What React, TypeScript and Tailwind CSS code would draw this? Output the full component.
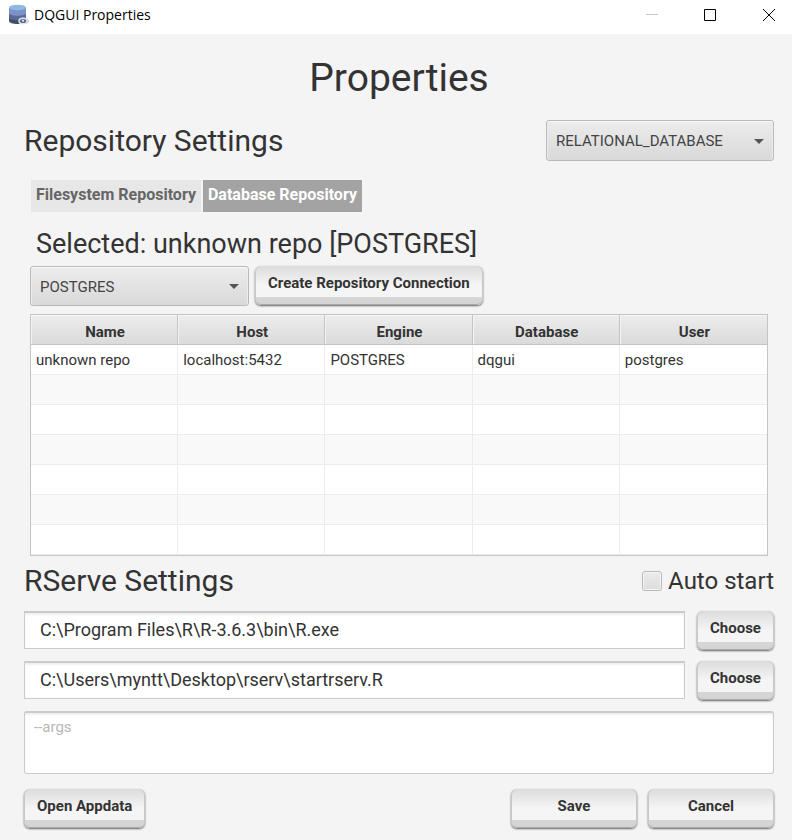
import type { ButtonHTMLAttributes, SelectHTMLAttributes } from 'react';

const columns = ['Name', 'Host', 'Engine', 'Database', 'User'];
const rows = [
  ['unknown repo', 'localhost:5432', 'POSTGRES', 'dqgui', 'postgres'],
  ...Array.from({ length: 6 }, () => ['', '', '', '', '']),
];

function DatabaseIcon() {
  return (
    <svg width="21" height="21" viewBox="0 0 21 21" aria-hidden="true">
      <path d="M1 13v4c0 1.700 4 3 8.500 3s8.500-1.300 8.500-3v-4z" fill="#414e68" />
      <path d="M1 8v5.500c0 1.700 4 2.700 8.500 2.700s8.500-1 8.500-2.700V8z" fill="#5a6a97" />
      <path d="M1 3.500V9c0 1.700 4 2.700 8.500 2.700S18 10.700 18 9V3.500z" fill="#7d92c9" />
      <ellipse cx="9.500" cy="3.500" rx="8.500" ry="2.800" fill="#8fb9e0" />
      <ellipse cx="15" cy="17" rx="4" ry="2.800" fill="#5b6c8e" stroke="#dfe6f0" strokeWidth="1.500" />
      <circle cx="15" cy="16.800" r="1" fill="#f4f7fb" />
      <path d="M18.500 15l2 2-1.500 2.500" fill="none" stroke="#b4c0d2" strokeWidth="1" />
    </svg>
  );
}

function PushButton({ className = '', ...props }: ButtonHTMLAttributes<HTMLButtonElement>) {
  return (
    <button
      type="button"
      className={`h-[39px] rounded-md bg-[linear-gradient(#dcdcdc,#f5f5f5_50%,#f5f5f5_79%,#d6d6d6_80%,#d3d3d3)] px-[13px] pb-1.5 text-[15px] leading-5 font-bold text-[#333] shadow-[inset_1px_0_0_#c8c8c8,inset_-1px_0_0_#c8c8c8,inset_0_-1px_0_#aaa,0_1px_2px_rgba(0,0,0,0.6)] ${className}`}
      {...props}
    />
  );
}

function ComboBox({ className = '', ...props }: SelectHTMLAttributes<HTMLSelectElement>) {
  return (
    <div className={`relative ${className}`}>
      <select
        className="block h-full w-full appearance-none rounded-[3px] border border-[#b9b9b9] bg-linear-to-b from-[#ececec] to-[#d9d9d9] pt-0.5 pr-8 pl-[9px] text-[15px] text-[#444] shadow-[inset_0_1px_0_#fafafa,inset_1px_0_0_#ededed,inset_-1px_0_0_#ededed]"
        {...props}
      />
      <svg
        className="pointer-events-none absolute top-1/2 right-2.5 -mt-0.5"
        width="10"
        height="5"
        viewBox="0 0 10 5"
        aria-hidden="true"
      >
        <path d="M0 0h10L5 5z" fill="#555" />
      </svg>
    </div>
  );
}

function PathRow({ label, path }: { label: string; path: string }) {
  return (
    <div className="flex items-start gap-3">
      <input
        aria-label={label}
        defaultValue={path}
        className="h-[38px] min-w-0 flex-1 border border-t-2 border-[#cbcbcb] bg-white px-[15px] pb-0.5 text-lg text-[#333] shadow-[inset_0_2px_2px_#f0f0f0]"
      />
      <PushButton className="w-[77px]">Choose</PushButton>
    </div>
  );
}

export default function App() {
  return (
    <div className="min-h-screen bg-[#f4f4f4] font-['Roboto',sans-serif] text-[#333]">
      <header className="flex h-[34px] items-start bg-white">
        <div className="flex flex-1 items-center gap-1 pt-1 pl-2">
          <DatabaseIcon />
          <span className="pl-px font-['Open_Sans',sans-serif] text-sm text-black">DQGUI Properties</span>
        </div>
        <div className="flex pt-2">
          <button type="button" aria-label="Minimize" className="flex w-[58px] justify-center">
            <svg width="14" height="14" aria-hidden="true"><path d="M1 6.500h12" stroke="#c8c8c8" /></svg>
          </button>
          <button type="button" aria-label="Maximize" className="flex w-[58px] justify-center">
            <svg width="14" height="14" aria-hidden="true"><path d="M1.500 1.500h11v11h-11z" fill="none" stroke="#000" /></svg>
          </button>
          <button type="button" aria-label="Close" className="flex w-[53px] justify-end pr-4">
            <svg width="14" height="14" aria-hidden="true"><path d="M1 1l12 12M13 1L1 13" stroke="#000" /></svg>
          </button>
        </div>
      </header>

      <main className="pr-[18px] pb-[11px] pl-6">
        <h1 className="pt-5 pb-[18px] text-center text-[39px] leading-12">Properties</h1>

        <section aria-label="Repository Settings">
          <div className="flex items-center justify-between">
            <h2 className="text-3xl">Repository Settings</h2>
            <ComboBox aria-label="Repository type" className="h-[41px] w-[228px]">
              <option>RELATIONAL_DATABASE</option>
            </ComboBox>
          </div>

          <div className="px-1.5">
            <div role="tablist" className="mt-[19px] flex gap-0.5 pl-px text-base leading-5 font-bold">
              <button type="button" role="tab" aria-selected="false" className="h-8 bg-[#e7e7e7] px-[5px] pb-0.5 text-[#666]">
                Filesystem Repository
              </button>
              <button type="button" role="tab" aria-selected="true" className="h-8 bg-[#a3a3a3] px-[5px] pb-0.5 text-white">
                Database Repository
              </button>
            </div>
            <h3 className="mt-3.5 pl-1.5 text-[27px] leading-9">Selected: unknown repo [POSTGRES]</h3>
            <div className="mt-1 flex gap-1.5">
              <ComboBox aria-label="Database engine" className="h-10 w-[219px]">
                <option>POSTGRES</option>
              </ComboBox>
              <PushButton>Create Repository Connection</PushButton>
            </div>

            <table className="mt-2 w-full table-fixed border-separate border-spacing-0 border border-[#c4c4c4] bg-white">
              <thead>
                <tr>
                  {columns.map((name) => (
                    <th
                      key={name}
                      scope="col"
                      className="h-[30px] border-r border-b border-[#c4c4c4] bg-linear-to-b from-[#ededed] to-[#dadada] p-0 pt-1 pl-0.5 text-[15px] leading-5 font-bold shadow-[inset_1px_1px_0_#f5f5f5] last:border-r-0"
                    >
                      {name}
                    </th>
                  ))}
                </tr>
              </thead>
              <tbody>
                {rows.map((row, index) => (
                  <tr key={index} className="even:bg-[#f9f9f9]">
                    {row.map((value, cell) => (
                      <td
                        key={cell}
                        className="h-[30px] border-r border-b border-[#ececec] p-0 pl-[5px] text-[15px] leading-5 last:border-r-0"
                      >
                        {value}
                      </td>
                    ))}
                  </tr>
                ))}
              </tbody>
            </table>
          </div>
        </section>

        <section aria-label="RServe Settings">
          <div className="flex items-center justify-between pt-[7px] pb-3">
            <h2 className="text-3xl">RServe Settings</h2>
            <label className="flex items-center gap-1.5 text-2xl">
              <input
                type="checkbox"
                className="size-5 appearance-none rounded-[3px] border border-[#b9b9b9] bg-linear-to-b from-[#ececec] to-[#dcdcdc] shadow-[inset_0_0_0_1px_#f5f5f5] checked:bg-[#777]"
              />
              Auto start
            </label>
          </div>
          <div className="flex flex-col gap-[11px]">
            <PathRow label="R executable" path="C:\Program Files\R\R-3.6.3\bin\R.exe" />
            <PathRow label="RServe start script" path="C:\Users\myntt\Desktop\rserv\startrserv.R" />
            <textarea
              aria-label="RServe arguments"
              placeholder="--args"
              className="block h-[63px] w-full resize-none rounded-[3px] border border-t-2 border-[#cbcbcb] bg-white px-[9px] py-0.5 text-[15px] leading-6 shadow-[inset_0_2px_2px_#f0f0f0] placeholder:text-[#b8b8b8]"
            />
          </div>
        </section>

        <footer className="mt-[15px] flex gap-[11px]">
          <PushButton>Open Appdata</PushButton>
          <PushButton className="ml-auto w-[126px]">Save</PushButton>
          <PushButton className="w-[126px]">Cancel</PushButton>
        </footer>
      </main>
    </div>
  );
}
